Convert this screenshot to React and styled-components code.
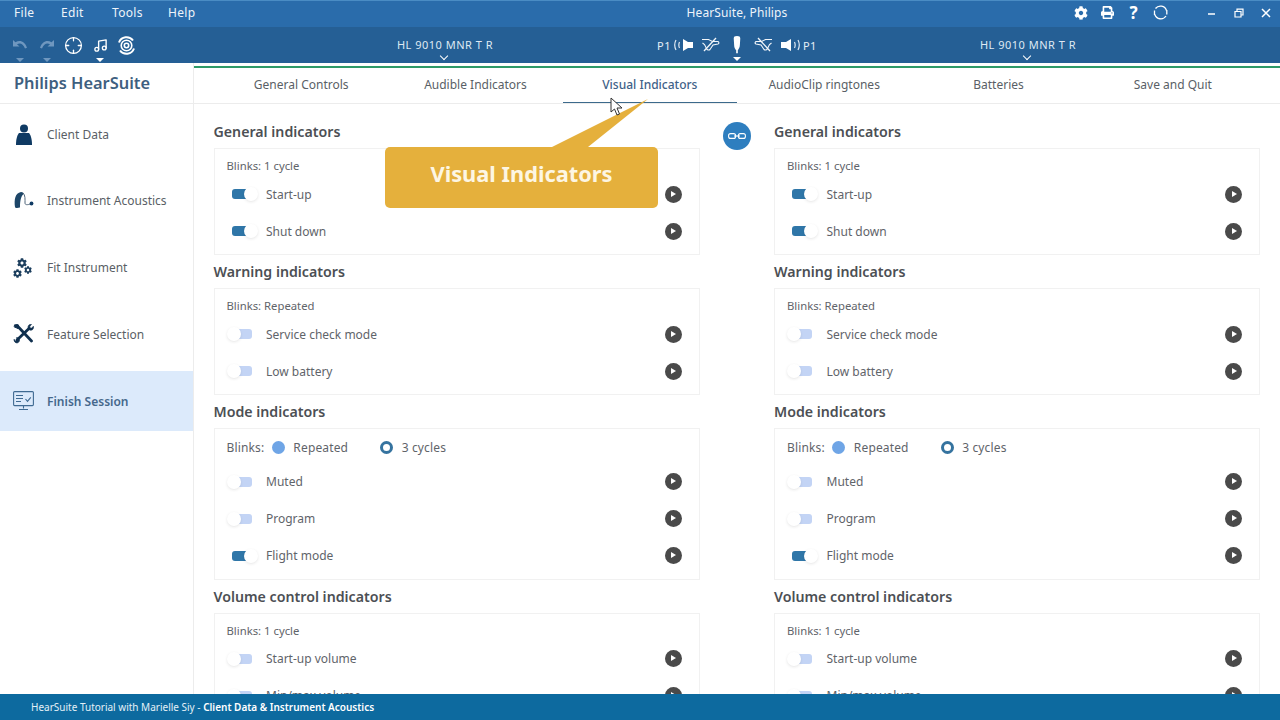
import styled, { createGlobalStyle } from "styled-components";
import { FaCog, FaPrint } from "react-icons/fa";
import { Crosshair, Music } from "lucide-react";

const sections = [
  {
    title: "General indicators",
    blinks: "Blinks: 1 cycle",
    rows: [
      { label: "Start-up", on: true },
      { label: "Shut down", on: true },
    ],
  },
  {
    title: "Warning indicators",
    blinks: "Blinks: Repeated",
    rows: [
      { label: "Service check mode" },
      { label: "Low battery" },
    ],
  },
  {
    title: "Mode indicators",
    radio: true,
    rows: [
      { label: "Muted" },
      { label: "Program" },
      { label: "Flight mode", on: true },
    ],
  },
  {
    title: "Volume control indicators",
    blinks: "Blinks: 1 cycle",
    rows: [
      { label: "Start-up volume" },
      { label: "Min/max volume" },
    ],
  },
];

const tabs = [
  "General Controls",
  "Audible Indicators",
  "Visual Indicators",
  "AudioClip ringtones",
  "Batteries",
  "Save and Quit",
];

const UserIcon = () => (
  <svg width="18" height="21" viewBox="0 0 18 21" fill="#0f3a63">
    <circle cx="9" cy="4.500" r="4" />
    <path d="M4 9h10c1.500 2 3 5 3 12H1c0-7 1.500-10 3-12z" />
  </svg>
);

const AidIcon = () => (
  <svg width="20" height="17" viewBox="0 0 20 17" fill="none">
    <path d="M1 15C0 8 1 1 7 0c2 0 3 1 2.500 2C7 4 6 9 6 15c0 1-5 1.500-5 0z" fill="#1d4668" />
    <path d="M9 1c2.500 2 2 7 2 10 0 2 2 2 6 1" stroke="#52677c" strokeWidth="1" />
    <circle cx="17.500" cy="11.500" r="1.900" fill="#0f3a63" />
  </svg>
);

const ToolsIcon = () => (
  <svg width="22" height="20" viewBox="0 0 22 20" fill="none" stroke="#10304f" strokeLinecap="round">
    <path d="M4 1.500 18.500 17" strokeWidth="2.800" />
    <path d="M2 .8 5.500 1 5 4.500 1.500 3z" fill="#10304f" strokeWidth="1" />
    <path d="M16 4.500 4 16" strokeWidth="2.800" />
    <path d="M20.500 2.500c.5 2-1 4.500-4 3.500l-1.500-1.500c-.500-3 1.500-4.500 3.500-4.300L16.500 3l1.500 1.300z" fill="#10304f" strokeWidth=".6" />
    <path d="M1 15.500c-.4 2 1.500 4 4 3.300L6.500 17c.4-2.500-1.500-3.500-3-3.400L4.500 16 3 17.300z" fill="#10304f" strokeWidth=".6" />
  </svg>
);

const ScreenIcon = () => (
  <svg width="21" height="20" viewBox="0 0 21 20" fill="none" stroke="#3f6a92" strokeWidth="1.100">
    <rect x=".6" y=".6" width="19.800" height="14" rx="1" />
    <path d="M3 4.500h7M3 7.500h7M3 10.500h5M12.500 8l2 2.300 3.300-4M10.500 15v2.500M6 18.500h9" />
  </svg>
);

const TargetIcon = () => (
  <svg width="19" height="19" viewBox="0 0 19 19" fill="none" stroke="#fff">
    <circle cx="9.500" cy="9.500" r="2.200" strokeWidth="1.600" />
    <circle cx="9.500" cy="9.500" r="5.300" strokeWidth="1.600" />
    <path d="M2 6.500A8 8 0 0 1 16 4.500M17 12.500A8 8 0 0 1 3 14.500" strokeWidth="2" />
  </svg>
);

const UndoIcon = ({ flip }) => (
  <svg width="16" height="12" viewBox="0 0 16 12" style={flip ? { transform: "scaleX(-1)" } : undefined} fill="currentColor">
    <path d="M1 1v6.500h6.500L5 5.200c3-1.500 6-.8 8 4.300l2-.8C13 2.500 8 .5 3.500 3.200z" />
  </svg>
);

const RefreshIcon = () => (
  <svg width="15" height="15" viewBox="0 0 15 15" fill="none" stroke="#fff" strokeWidth="1.300">
    <path d="M2.500 3.500A6.300 6.300 0 0 1 13.500 5.500M13 11a6.300 6.300 0 0 1-11.200-1.500" />
    <path d="M1.500 5.500V10" />
    <path d="M13.800 5v4.500" />
  </svg>
);

// waves on the outer side, cone opening towards them
const SpeakerIcon = ({ flip }) => (
  <svg width="21" height="16" viewBox="0 0 21 16" style={flip ? { transform: "scaleX(-1)" } : undefined} fill="none">
    <path d="M10 2l5 3h5v6h-5l-5 3z" fill="#fff" />
    <path d="M6.500 5c-.9 2-.9 4 0 6M3 3c-1.700 3.300-1.700 6.700 0 10" stroke="#dfe9f3" strokeWidth="1.200" />
  </svg>
);

const NoEarIcon = ({ flip }) => (
  <NoEarWrap>
    <svg width="20" height="16" viewBox="0 0 20 16" style={flip ? { transform: "scaleX(-1)" } : undefined} fill="none" stroke="#f2f6fa" strokeWidth="1.100">
      <path d="M1 2.500h6.500l4 2h5c1.500 0 2 2 .5 2.500l-5 1-3 4.500c-1 1-3 .5-3.500-1L3.500 7.500 1.500 6" />
      <path d="M3 14 15 1" strokeWidth="1.300" />
    </svg>
  </NoEarWrap>
);

const BudIcon = () => (
  <svg width="10" height="18" viewBox="0 0 10 22" fill="#fff">
    <path d="M1 3c0-2 1-3 4-3s4 1 4 3l-.5 8c0 3-1.500 5-2.500 6.500V21H4v-3.500C2.500 16 1.500 14 1.500 11z" />
  </svg>
);

const CursorIcon = () => (
  <svg width="13" height="19" viewBox="0 0 13 19">
    <path d="M1 1v14l3.500-3 2.500 6 2.500-1-2.500-6H12z" fill="#fff" stroke="#333" strokeWidth="1" />
  </svg>
);

const Section = ({ section }) => (
  <div>
    <Heading>{section.title}</Heading>
    <Card>
      {section.radio ? (
        <RadioLine>
          <span>Blinks:</span>
          <RadioDot />
          <RadioLabel>Repeated</RadioLabel>
          <RadioRing />
          <RadioLabel>3 cycles</RadioLabel>
        </RadioLine>
      ) : (
        <BlinkLine>{section.blinks}</BlinkLine>
      )}
      {section.rows.map((row) => (
        <Row key={row.label}>
          <Switch>
            <Track $on={row.on} />
            <Knob $on={row.on} />
          </Switch>
          <RowLabel>{row.label}</RowLabel>
          <PlayButton />
        </Row>
      ))}
    </Card>
  </div>
);

const Device = () => (
  <DeviceName>
    HL 9010 MNR T R
    <Chevron />
  </DeviceName>
);

const App = () => (
  <Page>
    <GlobalStyle />
    <TitleBar>
      <Menu>
        <span>File</span>
        <span>Edit</span>
        <span>Tools</span>
        <span>Help</span>
      </Menu>
      <AppTitle>HearSuite, Philips</AppTitle>
      <TitleIcons>
        <FaCog size={14} />
        <FaPrint size={13} />
        <Question>?</Question>
        <RefreshIcon />
      </TitleIcons>
      <WindowButtons>
        <svg width="10" height="10" viewBox="0 0 10 10" stroke="#fff" strokeWidth="1.500">
          <path d="M1 6h7" />
        </svg>
        <svg width="10" height="10" viewBox="0 0 10 10" fill="none" stroke="#fff" strokeWidth="1.200">
          <path d="M1 3.500h6v5.500H1zM3 3.500V1.200h6V7H7" />
        </svg>
        <svg width="10" height="10" viewBox="0 0 10 10" stroke="#fff" strokeWidth="1.500">
          <path d="M1 1l8 8M9 1l-8 8" />
        </svg>
      </WindowButtons>
    </TitleBar>
    <ToolBar>
      <ToolIcons>
        <ToolIcon $faded $caret>
          <UndoIcon />
        </ToolIcon>
        <ToolIcon $faded $caret>
          <UndoIcon flip />
        </ToolIcon>
        <ToolIcon>
          <Crosshair size={19} strokeWidth={1.600} />
        </ToolIcon>
        <ToolIcon $caret>
          <Music size={15} strokeWidth={2.200} />
        </ToolIcon>
        <ToolIcon>
          <TargetIcon />
        </ToolIcon>
      </ToolIcons>
      <Device />
      <SideStatus>
        <span>P1</span>
        <SpeakerIcon />
        <NoEarIcon />
        <BudWrap>
          <BudIcon />
          <Chevron $solid />
        </BudWrap>
        <NoEarIcon flip />
        <SpeakerIcon flip />
        <span>P1</span>
      </SideStatus>
      <Device />
    </ToolBar>
    <Body>
      <Sidebar>
        <Brand>Philips HearSuite</Brand>
        <NavList>
          <NavItem>
            <NavIcon>
              <UserIcon />
            </NavIcon>
            Client Data
          </NavItem>
          <NavItem>
            <NavIcon>
              <AidIcon />
            </NavIcon>
            Instrument Acoustics
          </NavItem>
          <NavItem>
            <NavIcon>
              <GearCluster>
                <FaCog size={10} />
                <FaCog size={9} />
                <FaCog size={8} />
              </GearCluster>
            </NavIcon>
            Fit Instrument
          </NavItem>
          <NavItem>
            <NavIcon>
              <ToolsIcon />
            </NavIcon>
            Feature Selection
          </NavItem>
          <NavItem $active>
            <NavIcon>
              <ScreenIcon />
            </NavIcon>
            Finish Session
          </NavItem>
        </NavList>
      </Sidebar>
      <Content>
        <Tabs>
          {tabs.map((tab) => (
            <Tab key={tab} $active={tab === "Visual Indicators"}>
              {tab}
            </Tab>
          ))}
        </Tabs>
        <Panels>
          <Column>
            {sections.map((s) => (
              <Section key={s.title} section={s} />
            ))}
          </Column>
          <LinkColumn>
            <LinkButton>
              <svg width="18" height="6" viewBox="0 0 18 6" fill="none" stroke="#fff" strokeWidth="1.100">
                <rect x=".6" y=".6" width="7" height="4.800" rx="2" />
                <rect x="10.400" y=".6" width="7" height="4.800" rx="2" />
                <path d="M6 3h6" />
              </svg>
            </LinkButton>
          </LinkColumn>
          <Column>
            {sections.map((s) => (
              <Section key={s.title} section={s} />
            ))}
          </Column>
        </Panels>
        <CalloutTail viewBox="0 0 100 50" width="100" height="50">
          <path d="M0 50 96 2 36 50z" fill="#e5b03c" />
        </CalloutTail>
        <Callout>Visual Indicators</Callout>
        <Cursor>
          <CursorIcon />
        </Cursor>
      </Content>
    </Body>
    <Footer>
      HearSuite Tutorial with Marielle Siy -&nbsp;<b>Client Data &amp; Instrument Acoustics</b>
    </Footer>
  </Page>
);

const GlobalStyle = createGlobalStyle`
  html, body {
    margin: 0;
    padding: 0;
    background: #fff;
  }
  body {
    font-family: "Noto Sans", "Open Sans", sans-serif;
  }
`;

const Page = styled.div`
  width: 1280px;
  height: 720px;
  overflow: hidden;
  display: flex;
  flex-direction: column;
`;

const TitleBar = styled.div`
  height: 27px;
  flex: none;
  box-sizing: border-box;
  border-top: 1px solid #4a8cc4;
  padding-bottom: 3px;
  background: #2a6cab;
  color: #eef4fa;
  font-size: 12px;
  display: grid;
  grid-template-columns: 617px 240px 311px 1fr;
  align-items: center;
`;

const Menu = styled.div`
  display: flex;
  padding-left: 14px;
  letter-spacing: 0.3px;
  span:nth-child(1) {
    width: 47px;
  }
  span:nth-child(2) {
    width: 51px;
  }
  span:nth-child(3) {
    width: 56px;
  }
`;

const AppTitle = styled.div`
  text-align: center;
  letter-spacing: 0.1px;
`;

const TitleIcons = styled.div`
  display: flex;
  align-items: center;
  justify-content: flex-end;
  gap: 13px;
  color: #fff;
`;

const Question = styled.span`
  font-size: 17px;
  font-weight: 700;
  line-height: 20px;
  width: 13px;
  text-align: center;
`;

const WindowButtons = styled.div`
  display: flex;
  align-items: center;
  justify-content: flex-end;
  gap: 17px;
  padding-right: 9px;
`;

const ToolBar = styled.div`
  height: 36px;
  flex: none;
  background: #255f95;
  color: #dfe9f3;
  display: flex;
  align-items: center;
  font-size: 11px;
  letter-spacing: 0.5px;
`;

const ToolIcons = styled.div`
  width: 345px;
  box-sizing: border-box;
  display: flex;
  align-items: center;
  padding-left: 10px;
  gap: 6.7px;
`;

const ToolIcon = styled.div`
  position: relative;
  width: 20px;
  height: 20px;
  display: flex;
  align-items: center;
  justify-content: center;
  color: ${(p) => (p.$faded ? "#6f97bf" : "#fff")};
  &::after {
    content: "";
    display: ${(p) => (p.$caret ? "block" : "none")};
    position: absolute;
    left: 6px;
    bottom: -7px;
    border: 4px solid transparent;
    border-bottom: 0;
    border-top-color: currentColor;
  }
`;

const DeviceName = styled.div`
  position: relative;
  width: 200px;
  text-align: center;
  padding-bottom: 2px;
`;

const Chevron = styled.i`
  position: absolute;
  left: 50%;
  margin-left: -4px;
  ${(p) =>
    p.$solid
      ? `bottom: -7px; width: 0; height: 0; border: 4px solid transparent; border-bottom: 0; border-top-color: #fff;`
      : `bottom: -5px; width: 5px; height: 5px; border: solid #fff; border-width: 0 1.5px 1.5px 0; transform: rotate(45deg);`}
`;

const SideStatus = styled.div`
  width: 160px;
  margin: 0 111px 0 112px;
  display: flex;
  align-items: center;
  gap: 2px;
  color: #e6eef6;
`;

const NoEarWrap = styled.span`
  display: flex;
  margin: 0 5px;
`;

const BudWrap = styled.div`
  position: relative;
  height: 18px;
  display: flex;
  margin: 0 4px;
`;

const Body = styled.div`
  flex: 1;
  min-height: 0;
  display: grid;
  grid-template-columns: 194px 1fr;
`;

const Sidebar = styled.div`
  border-right: 1px solid #ececec;
  box-sizing: border-box;
`;

const Brand = styled.div`
  height: 41px;
  box-sizing: border-box;
  padding: 8px 0 0 14px;
  border-bottom: 1px solid #ececec;
  color: #3e5f80;
  font-size: 16.400px;
  font-weight: 600;
`;

const NavList = styled.div`
  display: flex;
  flex-direction: column;
  gap: 6.75px;
`;

const NavItem = styled.div`
  height: 60px;
  box-sizing: border-box;
  padding-left: 12px;
  display: flex;
  align-items: center;
  font-size: 12px;
  font-weight: ${(p) => (p.$active ? 600 : 400)};
  color: ${(p) => (p.$active ? "#45688c" : "#5a5f66")};
  background: ${(p) => (p.$active ? "#dceafb" : "transparent")};
`;

const NavIcon = styled.div`
  width: 23px;
  margin-right: 12px;
  display: flex;
  justify-content: center;
`;

const GearCluster = styled.div`
  display: grid;
  grid-template-columns: 11px 10px;
  row-gap: 1px;
  width: 21px;
  color: #1d3f5e;
  svg:nth-child(1) {
    grid-column: 1 / 3;
    justify-self: center;
    margin-left: -3px;
  }
  svg:nth-child(3) {
    margin-top: -3px;
  }
`;

const Content = styled.div`
  position: relative;
  min-width: 0;
  min-height: 0;
  display: flex;
  flex-direction: column;
`;

const Tabs = styled.div`
  flex: none;
  box-sizing: border-box;
  margin-top: 3px;
  height: 38px;
  border-top: 2px solid #2e9a68;
  border-bottom: 1px solid #ececec;
  padding: 0 20px;
  display: grid;
  grid-template-columns: repeat(6, 1fr);
`;

const Tab = styled.div`
  text-align: center;
  padding-top: 8px;
  font-size: 12px;
  font-weight: ${(p) => (p.$active ? 500 : 400)};
  color: ${(p) => (p.$active ? "#3f6288" : "#5a5f66")};
  border-bottom: ${(p) => (p.$active ? "1.5px solid #3c6a8c" : "0")};
  height: 35px;
  box-sizing: border-box;
`;

const Panels = styled.div`
  flex: 1;
  min-height: 0;
  overflow: hidden;
  padding: 11px 20px 0 19.500px;
  display: grid;
  grid-template-columns: 486px 1fr 486px;
`;

const Column = styled.div`
  min-width: 0;
`;

const LinkColumn = styled.div`
  display: flex;
  justify-content: center;
  padding-top: 7px;
`;

const LinkButton = styled.div`
  width: 28px;
  height: 28px;
  border-radius: 50%;
  background: #2e7ebf;
  display: flex;
  align-items: center;
  justify-content: center;
`;

const Heading = styled.div`
  height: 33px;
  line-height: 33px;
  font-size: 14.200px;
  font-weight: 600;
  color: #4c4f54;
`;

const Card = styled.div`
  box-sizing: border-box;
  border: 1px solid #f1f1f1;
  padding: 9px 17px 4.500px 12px;
`;

const BlinkLine = styled.div`
  height: 17.500px;
  line-height: 15px;
  font-size: 11.300px;
  color: #5f646a;
`;

const RadioLine = styled.div`
  height: 18px;
  margin-bottom: 7px;
  display: flex;
  align-items: center;
  font-size: 12px;
  letter-spacing: 0.15px;
  color: #5f646a;
`;

const RadioDot = styled.i`
  width: 13px;
  height: 13px;
  margin-left: 7.500px;
  border-radius: 50%;
  background: #6fa5e6;
`;

const RadioRing = styled.i`
  width: 7px;
  height: 7px;
  margin-left: 32px;
  border-radius: 50%;
  border: 3.500px solid #35739f;
  background: #fff;
`;

const RadioLabel = styled.span`
  margin-left: 8.500px;
`;

const Row = styled.div`
  height: 37px;
  display: flex;
  align-items: center;
`;

const Switch = styled.div`
  position: relative;
  width: 31px;
  height: 14px;
  margin-right: 8.500px;
  flex: none;
`;

const Track = styled.i`
  position: absolute;
  left: 5px;
  top: 2px;
  width: 20px;
  height: 10px;
  border-radius: 3px;
  background: ${(p) => (p.$on ? "#2f76a8" : "#c3d4f5")};
`;

const Knob = styled.i`
  position: absolute;
  top: 0;
  left: ${(p) => (p.$on ? "17px" : "0")};
  width: 14px;
  height: 14px;
  border-radius: 50%;
  background: #fff;
  box-shadow: 0 1px 3px rgba(0, 0, 0, 0.1);
`;

const RowLabel = styled.span`
  flex: 1;
  font-size: 12px;
  color: #5f646a;
`;

const PlayButton = styled.i`
  position: relative;
  width: 17px;
  height: 17px;
  border-radius: 50%;
  background: #4a4a4a;
  &::after {
    content: "";
    position: absolute;
    left: 6.500px;
    top: 5px;
    border: 3.500px solid transparent;
    border-right: 0;
    border-left: 5px solid #fff;
  }
`;

const Callout = styled.div`
  position: absolute;
  left: 191px;
  top: 84px;
  width: 273px;
  height: 61px;
  border-radius: 5px;
  background: #e5b03c;
  color: #fdf6e3;
  font-size: 21.800px;
  font-weight: 700;
  display: flex;
  align-items: center;
  justify-content: center;
  padding-bottom: 9px;
  box-sizing: border-box;
`;

const CalloutTail = styled.svg`
  position: absolute;
  left: 358px;
  top: 34px;
  z-index: 1;
`;

const Cursor = styled.div`
  position: absolute;
  left: 416px;
  top: 34px;
  z-index: 2;
`;

const Footer = styled.div`
  height: 26px;
  flex: none;
  background: #0d6a9f;
  color: #e4f0f7;
  font-size: 10px;
  padding-left: 31px;
  display: flex;
  align-items: center;
  b {
    font-weight: 600;
    color: #fff;
  }
`;

export default App;
